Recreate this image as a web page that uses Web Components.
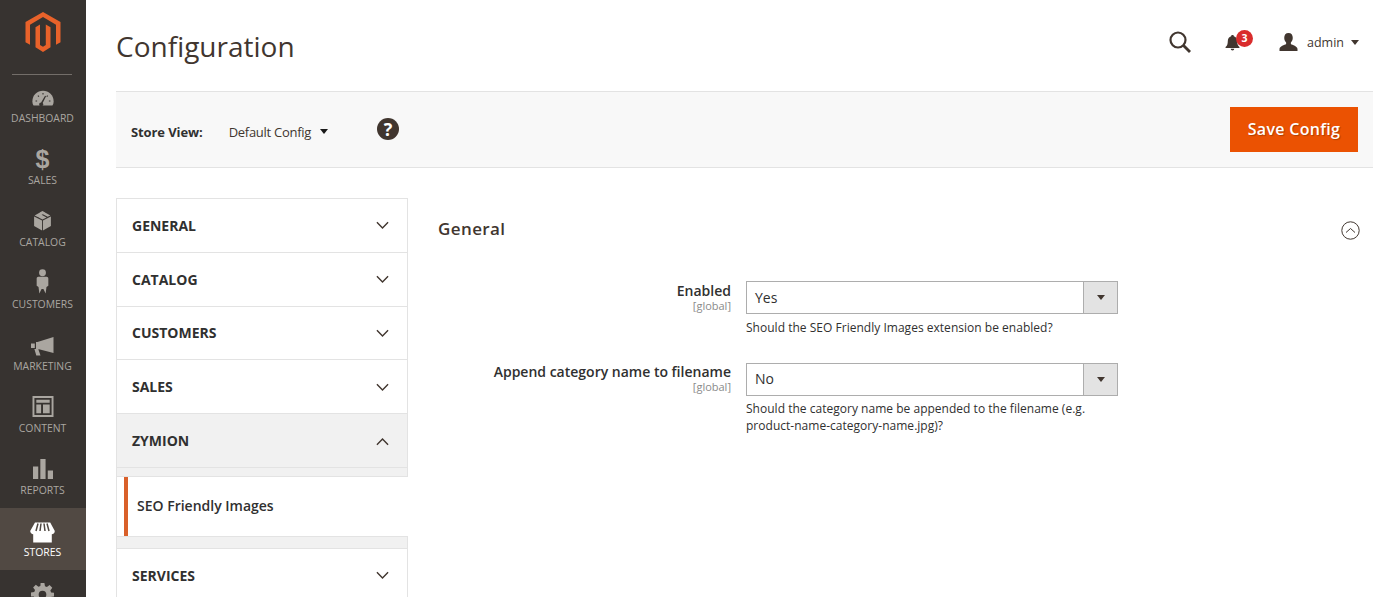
<!DOCTYPE html>
<html lang="en"><head><meta charset="utf-8"><title>Configuration</title>
<style>
html,body{margin:0;height:597px;overflow:hidden;background:#fff;font-family:"Open Sans",sans-serif;color:#41362f}
</style></head><body>
<admin-app></admin-app>
<script>
const icons={
dashboard:'<svg width="22" height="16" viewBox="0 0 28 20"><path fill="#aaa6a0" d="M2 19.500C.8 17.600.5 15.800.5 14 .5 6.500 6.500.8 14 .8S27.500 6.500 27.500 14c0 1.800-.3 3.600-1.500 5.500z"/><path fill="#373330" d="M13.600 16.500l4.300-8.800-1.300-.5-5 8.400a2.500 2.500 0 1 0 2 .9zM4.500 13.200h2v1.300h-2zM21.500 13.200h2v1.300h-2zM7 7.500l1-1 1.300 1.300-1 1zM19.500 6.500l1 1-1.300 1.300-1-1zM13.300 3.500h1.400v2h-1.400z"/></svg>',
sales:'<span class="dollar">$</span>',
catalog:'<svg style="margin-top:-3px" width="19" height="21" viewBox="0 0 20 23"><path fill="#aaa6a0" d="M9.500 11.500L.8 7v10.500l8.700 5zM10.500 11.500v11l8.700-5V7zM10 1L6.800 2.700l8.800 4.700 3-1.500zM1.400 5.900l3.300 1.800 8.800-4.700L10 1zM5.800 8.200l4.200 2.300 4.500-2.400L6 3.500 3 5.500z"/></svg>',
customers:'<svg style="margin-top:-5px" width="13" height="25" viewBox="0 0 14 27"><circle cx="7" cy="4" r="3.700" fill="#aaa6a0"/><path fill="#aaa6a0" d="M2.500 8.500h9c1 0 1.800.8 1.800 1.800V18l-2 1.500-.9 7L8 21.500H6l-2.400 5-.9-7L.7 18v-7.700c0-1 .8-1.800 1.800-1.800z"/></svg>',
marketing:'<svg width="23" height="19" viewBox="0 0 23 19"><path fill="#aaa6a0" d="M22.500 0v16L8 12.200h-.7L9.500 18.500H5.300L3.400 12H5V5h1.500zM0 6.500h3.800V11H0z"/></svg>',
content:'<svg style="margin-top:-3px" width="22" height="21" viewBox="0 0 22 22"><path fill="#aaa6a0" fill-rule="evenodd" d="M0 0h22v22H0zM2 2v18h18V2zM4 4h14v3H4zM4 9h5v9H4zM11 9h7v9h-7z"/></svg>',
reports:'<svg style="margin-top:-2px" width="20" height="22" viewBox="0 0 21 21"><path fill="#aaa6a0" d="M0 8h5.500v13H0zM7.700 0h5.500v21H7.700zM15.500 12H21v9h-5.500z"/></svg>',
stores:'<svg width="25" height="21" viewBox="0 0 25 21"><path fill="#fff" d="M5 .5h15.200L24.800 9c0 2.200-2 3.300-3 3.200v8.300H3.200v-8.300C2 12.300.2 11 .2 9z"/><path stroke="#514943" stroke-width="1.500" d="M8 1.500L6 9M11 1.500L10 9M14 1.500l1 7.500M17 1.500L19 9"/></svg>',
gear:'<svg width="23" height="23" viewBox="0 0 24 24"><path fill="#aaa6a0" fill-rule="evenodd" d="M10 0h4l.6 3.400 2 .8 2.800-2 2.800 2.800-2 2.800.8 2L24 10.200v3.800l-3.400.6-.8 2 2 2.800-2.800 2.800-2.800-2-2 .8L14 24h-4l-.6-3.400-2-.8-2.800 2-2.800-2.800 2-2.800-.8-2L0 14v-4l3.400-.6.800-2-2-2.800L5 1.800l2.800 2 2-.8zM12 8a4 4 0 1 0 0 8 4 4 0 0 0 0-8z"/></svg>'
};
const chev=up=>`<svg width="13" height="9" viewBox="0 0 14 9"><path fill="none" stroke="#41362f" stroke-width="1.500" d="${up?'M1 8l6-6.300L13 8':'M1 1l6 6.300L13 1'}"/></svg>`;

class NavItem extends HTMLElement{
  constructor(){super();const s=this.attachShadow({mode:'open'});
  s.innerHTML=`<style>
  :host{display:flex;flex-direction:column;align-items:center;height:62px;box-sizing:border-box;padding:12px 1px 0 0;color:#aaa6a0;font-size:10.400px;line-height:14px}
  :host([active]){background:#514943;color:#fff}
  .i{height:24px;display:flex;align-items:center;justify-content:center;margin-bottom:1px}
  .dollar{font:700 25px/24px "Liberation Sans",sans-serif;color:#aaa6a0;margin-top:-2px}
  span.l{white-space:nowrap}
  </style><div class="i">${icons[this.getAttribute('icon')]}</div><span class="l"><slot></slot></span>`;}
}
customElements.define('nav-item',NavItem);

class AdminSidebar extends HTMLElement{
  constructor(){super();const s=this.attachShadow({mode:'open'});
  s.innerHTML=`<style>
  :host{display:block;width:86px;height:597px;background:#373330;flex:none;overflow:hidden}
  .logo{height:74px;box-sizing:border-box;padding:12px 1px 0 0;display:flex;justify-content:center}
  hr{margin:0 14px -1px 12px;border:0;border-top:1px solid #736e69;height:0}
  </style>
  <div class="logo"><svg width="36" height="40" viewBox="0 0 36 40"><path fill="#e8622a" d="M18 0L35.500 10V30.200L31 32.800V12.800L18 5 5 12.800V32.800L.5 30.200V10z"/><path fill="#e8622a" d="M10.500 15.200L15 12.600V33L18 34.700 20.800 33V12.600L25.500 15.200V35.200L18 40 10.500 35.200z"/></svg></div>
  <hr>
  <slot></slot>`;}
}
customElements.define('admin-sidebar',AdminSidebar);

class PageHeader extends HTMLElement{
  constructor(){super();const s=this.attachShadow({mode:'open'});
  s.innerHTML=`<style>
  :host{display:flex;align-items:flex-start;justify-content:space-between;height:91px;box-sizing:border-box;padding:26px 19px 0 0}
  h1{margin:0;font:400 28px/40px "Open Sans",sans-serif;color:#41362f}
  .tools{display:flex;align-items:center;margin-top:1px;height:30px}
  .bell{position:relative;margin-left:34px;width:18px;height:18px;display:flex}
  .bell svg{margin-top:2px}
  .badge{position:absolute;left:11px;top:-3px;width:17px;height:17px;border-radius:50%;background:#d92c2c;color:#fff;font:700 10.500px/17px "Open Sans",sans-serif;text-align:center}
  .user{display:flex;align-items:center;margin-left:36px;font-size:12.500px;color:#41362f}
  .user svg{margin-right:9px}
  .caret{width:0;height:0;border:4.500px solid transparent;border-top:5px solid #41362f;border-bottom:0;margin-left:7px}
  </style>
  <h1><slot></slot></h1>
  <div class="tools">
   <svg width="22" height="22" viewBox="0 0 22 22"><circle cx="9" cy="9" r="7.500" fill="none" stroke="#41362f" stroke-width="2.200"/><path stroke="#41362f" stroke-width="2.800" d="M14.500 14.500l6.500 6.500"/></svg>
   <div class="bell"><svg width="15" height="16" viewBox="0 0 16 18"><path fill="#41362f" d="M8 0c1 0 1.500.6 1.500 1.300C12 2 13.300 4 13.300 7c0 3 .8 5 2.500 6.500v1H.2v-1C2 12 2.700 10 2.700 7c0-3 1.300-5 3.800-5.700C6.500.6 7 0 8 0zM6 15.500h4A2 2 0 0 1 8 17.500a2 2 0 0 1-2-2z"/></svg><span class="badge">3</span></div>
   <div class="user"><svg width="19" height="18" viewBox="0 0 20 19"><path fill="#41362f" d="M10 0c3 0 4.500 2.200 4.500 5 0 2-.8 3.800-2 5v1.500c1.500 1.200 7 2 7 5.500v2H.500v-2c0-3.500 5.500-4.300 7-5.500V10c-1.200-1.200-2-3-2-5 0-2.800 1.500-5 4.500-5z"/></svg>admin<span class="caret"></span></div>
  </div>`;}
}
customElements.define('page-header',PageHeader);

class StoreBar extends HTMLElement{
  constructor(){super();const s=this.attachShadow({mode:'open'});
  s.innerHTML=`<style>
  :host{display:flex;align-items:center;height:77px;box-sizing:border-box;margin-right:5px;padding:0 15px;background:#f8f8f8;border-top:1px solid #e3e3e3;border-bottom:1px solid #e3e3e3;font-size:13px;color:#41362f}
  b{font-weight:700;color:#303030;letter-spacing:-.1px;padding-top:4px}
  .scope{margin-left:26px;display:flex;align-items:center;letter-spacing:-.28px;padding-top:4px}
  .caret{width:0;height:0;border:4.500px solid transparent;border-top:5px solid #1a1a1a;border-bottom:0;margin-left:9px}
  .help{margin-left:49px;width:22px;height:22px;border-radius:50%;background:#41362f;color:#fff;font:700 18px/22px "Open Sans",sans-serif;text-align:center;margin-top:-1px}
  button{margin-left:auto;width:128px;height:45px;background:#eb5202;border:0;color:#fff;font:600 16px/45px "Open Sans",sans-serif;padding:0;letter-spacing:.3px;text-shadow:1px 1px 1px rgba(0,0,0,.25)}
  </style><b>Store View:</b><span class="scope">Default Config<span class="caret"></span></span><span class="help">?</span><button>Save Config</button>`;}
}
customElements.define('store-bar',StoreBar);

class TabHead extends HTMLElement{
  constructor(){super();const s=this.attachShadow({mode:'open'});
  const open=this.hasAttribute('open');
  s.innerHTML=`<style>
  :host{display:flex;align-items:center;justify-content:space-between;height:53.800px;box-sizing:border-box;padding:1px 18px 0 15px;border-bottom:1px solid #e3e3e3;background:${open?'#f1f1f1':'#fff'};font:700 14px/20px "Open Sans",sans-serif;color:#303030;text-transform:uppercase}
  </style><slot></slot>${chev(open)}`;}
}
customElements.define('tab-head',TabHead);

class ConfigTabs extends HTMLElement{
  constructor(){super();const s=this.attachShadow({mode:'open'});
  s.innerHTML=`<style>
  :host{display:block;width:292px;flex:none;box-sizing:border-box;border:1px solid #e3e3e3;border-bottom:0;background:#fff}
  .gap{height:8px;background:#f1f1f1;border-bottom:1px solid #e3e3e3}
  .sub{display:flex;align-items:center;height:59px;box-sizing:border-box;margin-left:7px;padding-left:9px;border-left:4px solid #d9602a;font:600 14px/20px "Open Sans",sans-serif;color:#303030;background:#fff;margin-right:-1px}
  .gap2{height:11px;background:#f1f1f1;border-top:1px solid #e3e3e3;border-bottom:1px solid #e3e3e3}
  .subwrap{background:#fff}
  </style>
  <slot name="a"></slot>
  <div class="gap"></div>
  <div class="subwrap"><div class="sub"><slot name="sub"></slot></div></div>
  <div class="gap2"></div>
  <slot name="b"></slot>`;}
}
customElements.define('config-tabs',ConfigTabs);

class SelectField extends HTMLElement{
  constructor(){super();const s=this.attachShadow({mode:'open'});
  s.innerHTML=`<style>
  :host{display:grid;grid-template-columns:293px 372px;column-gap:15px;height:82px;font-size:12px;color:#303030}
  .lab{text-align:right;padding-top:1px}
  :host([tight]) .lab{padding-top:0}
  .lab b{display:block;font:600 14px/18px "Open Sans",sans-serif;color:#303030}
  .lab small{display:block;font-size:11px;line-height:12px;color:#8a8a8a}
  .sel{display:flex;height:33px;box-sizing:border-box;border:1px solid #adadad;font-size:14px;line-height:31px;color:#303030;background:#fff}
  :host([tight]) .sel{line-height:30px}
  .v{flex:1;padding-left:8px}
  .arr{width:33px;background:#e3e3e3;border-left:1px solid #adadad;display:flex;align-items:center;justify-content:center}
  .arr i{width:0;height:0;border:4.500px solid transparent;border-top:5px solid #41362f;border-bottom:0}
  .note{margin:5px 0 0;font-size:12px;line-height:17.500px;color:#303030;letter-spacing:.02px}
  :host([tight]) .note{margin-top:3.500px;line-height:17.500px}
  </style>
  <div class="lab"><b>${this.getAttribute('label')}</b><small>[global]</small></div>
  <div><div class="sel"><span class="v">${this.getAttribute('value')}</span><span class="arr"><i></i></span></div><p class="note"><slot></slot></p></div>`;}
}
customElements.define('select-field',SelectField);

class ConfigSection extends HTMLElement{
  constructor(){super();const s=this.attachShadow({mode:'open'});
  s.innerHTML=`<style>
  :host{display:block;flex:1;min-width:0;padding-left:30px;padding-right:13px;box-sizing:border-box}
  .h{display:flex;align-items:center;justify-content:space-between;height:62px;margin-bottom:21px}
  h2{margin:0;font:600 17px/24px "Open Sans",sans-serif;color:#41362f;letter-spacing:.4px}
  .h svg{margin-top:2px}
  </style>
  <div class="h"><h2><slot name="title"></slot></h2><svg width="19" height="19" viewBox="0 0 19 19"><circle cx="9.500" cy="9.500" r="8.700" fill="none" stroke="#41362f"/><path fill="none" stroke="#41362f" d="M5 11.500l4.500-4 4.500 4"/></svg></div>
  <slot></slot>`;}
}
customElements.define('config-section',ConfigSection);

class AdminApp extends HTMLElement{
  constructor(){super();const s=this.attachShadow({mode:'open'});
  s.innerHTML=`<style>
  :host{display:flex;width:1378px;height:597px;overflow:hidden}
  main{flex:1;min-width:0;padding:0 0 0 30px}
  .cols{display:flex;margin-top:30px;margin-right:5px}
  </style>
  <admin-sidebar>
   <nav-item icon="dashboard">DASHBOARD</nav-item>
   <nav-item icon="sales">SALES</nav-item>
   <nav-item icon="catalog">CATALOG</nav-item>
   <nav-item icon="customers">CUSTOMERS</nav-item>
   <nav-item icon="marketing">MARKETING</nav-item>
   <nav-item icon="content">CONTENT</nav-item>
   <nav-item icon="reports">REPORTS</nav-item>
   <nav-item icon="stores" active>STORES</nav-item>
   <nav-item icon="gear"></nav-item>
  </admin-sidebar>
  <main>
   <page-header>Configuration</page-header>
   <store-bar></store-bar>
   <div class="cols">
    <config-tabs>
     <tab-head slot="a">General</tab-head>
     <tab-head slot="a">Catalog</tab-head>
     <tab-head slot="a">Customers</tab-head>
     <tab-head slot="a">Sales</tab-head>
     <tab-head slot="a" open>Zymion</tab-head>
     <span slot="sub">SEO Friendly Images</span>
     <tab-head slot="b">Services</tab-head>
    </config-tabs>
    <config-section>
     <span slot="title">General</span>
     <select-field label="Enabled" value="Yes">Should the SEO Friendly Images extension be enabled?</select-field>
     <select-field tight label="Append category name to filename" value="No">Should the category name be appended to the filename (e.g. product-name-category-name.jpg)?</select-field>
    </config-section>
   </div>
  </main>`;}
}
customElements.define('admin-app',AdminApp);
</script>
</body></html>
